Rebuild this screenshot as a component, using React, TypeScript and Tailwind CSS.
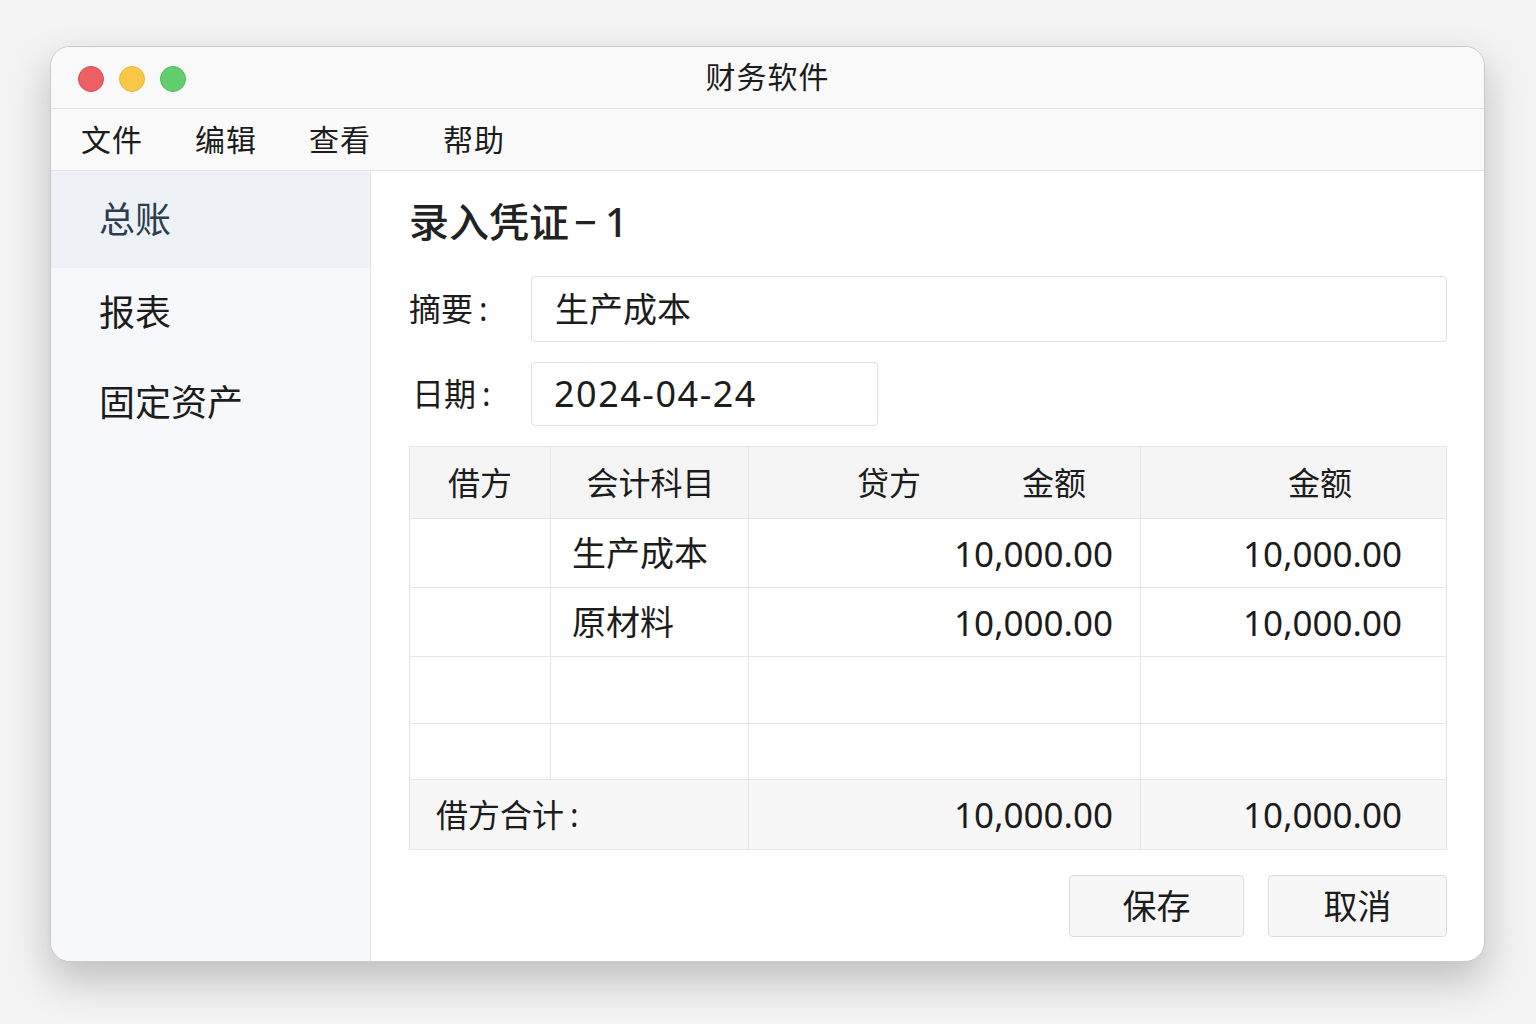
import React from "react";

const font = { fontFamily: '"Noto Sans", "Noto Sans CJK SC", sans-serif' };

function Cell({ className = "", children }: { className?: string; children?: React.ReactNode }) {
  return <div className={"flex items-center border-[#e6e6e6] " + className}>{children}</div>;
}

export default function App() {
  const rows = [
    { subject: "生产成本", a: "10,000.00", b: "10,000.00", h: "h-[69px]" },
    { subject: "原材料", a: "10,000.00", b: "10,000.00", h: "h-[69px]" },
    { subject: "", a: "", b: "", h: "h-[67px]" },
    { subject: "", a: "", b: "", h: "h-[56px]" },
  ];
  return (
    <div className="w-[1536px] h-[1024px] bg-[#f3f3f3] overflow-hidden pt-[46px] pl-[50px] text-[#1c1c1c]" style={font}>
      <div className="w-[1435px] h-[916px] rounded-[20px] border border-[#c9c9c9] bg-white overflow-hidden flex flex-col shadow-[0_18px_40px_rgba(0,0,0,0.22)]">
        {/* title bar */}
        <div className="h-[62px] shrink-0 bg-[#f9f9fa] border-b border-[#e2e2e2] grid grid-cols-[1fr_auto_1fr] items-center">
          <div className="flex items-center gap-[15px] pl-[27px] pt-[2px]">
            <div className="w-[26px] h-[26px] rounded-full bg-[#ec5f63] border border-[#d9494f]" />
            <div className="w-[26px] h-[26px] rounded-full bg-[#f8c748] border border-[#e8b73c]" />
            <div className="w-[26px] h-[26px] rounded-full bg-[#62cf6e] border border-[#4fbb5c]" />
          </div>
          <div className="text-[30px] leading-none tracking-[1px] pb-[2px]">财务软件</div>
          <div />
        </div>
        {/* menu bar */}
        <div className="h-[62px] shrink-0 bg-[#fafafa] border-b border-[#e4e4e4] flex items-center pl-[30px] text-[30px] leading-none tracking-[1px]">
          <span>文件</span>
          <span className="ml-[52px]">编辑</span>
          <span className="ml-[52px]">查看</span>
          <span className="ml-[72px]">帮助</span>
        </div>
        {/* body */}
        <div className="flex flex-1 min-h-0">
          <div className="w-[320px] shrink-0 bg-[#f6f8fb] border-r border-[#e4e6ea] flex flex-col text-[36px] leading-none">
            <div className="h-[97px] bg-[#eef2f7] flex items-center pl-[48px] text-[#2b3d50]">总账</div>
            <div className="h-[90px] flex items-center pl-[48px]">报表</div>
            <div className="h-[90px] flex items-center pl-[48px]">固定资产</div>
          </div>
          <div className="flex-1 pl-[38px] pr-[37px] pt-[27px]">
            <div className="h-[48px] flex items-center text-[40px] font-medium leading-none text-[#222]">
              <span>录入凭证</span>
              <span className="ml-[5px]">−</span>
              <span className="ml-[8px]">1</span>
            </div>
            <div className="mt-[30px] flex items-center">
              <div className="w-[122px] text-[32px] leading-none flex">
                <span>摘要</span>
                <span className="ml-[6px]">:</span>
              </div>
              <div className="flex-1 h-[66px] border border-[#e0e0e0] rounded-[4px] flex items-center pl-[23px] text-[34px] leading-none">生产成本</div>
            </div>
            <div className="mt-[20px] flex items-center">
              <div className="w-[122px] text-[32px] leading-none pl-[3px] flex">
                <span>日期</span>
                <span className="ml-[6px]">:</span>
              </div>
              <div className="w-[347px] h-[64px] border border-[#e0e0e0] rounded-[4px] flex items-center pl-[22px] text-[36px] tracking-[1.5px] leading-none">2024-04-24</div>
            </div>
            {/* table */}
            <div className="mt-[20px] w-[1038px] border border-[#e6e6e6] text-[32px] leading-none">
              <div className="grid grid-cols-[141px_198px_392px_1fr] h-[72px] bg-[#f5f5f5] border-b border-[#e6e6e6]">
                <Cell className="justify-center border-r">借方</Cell>
                <Cell className="justify-center border-r pl-[2px]">会计科目</Cell>
                <Cell className="justify-between border-r pl-[108px] pr-[54px]">
                  <span>贷方</span>
                  <span>金额</span>
                </Cell>
                <Cell className="justify-end pr-[94px]">金额</Cell>
              </div>
              {rows.map((r, i) => (
                <div key={i} className={"grid grid-cols-[141px_198px_392px_1fr] border-b border-[#e6e6e6] " + r.h}>
                  <Cell className="border-r" />
                  <Cell className="border-r pl-[21px] text-[34px]">{r.subject}</Cell>
                  <Cell className="border-r justify-end pr-[27px] text-[35px]">{r.a}</Cell>
                  <Cell className="justify-end pr-[44px] text-[35px]">{r.b}</Cell>
                </div>
              ))}
              <div className="grid grid-cols-[339px_392px_1fr] h-[69px] bg-[#f7f7f7]">
                <Cell className="border-r pl-[26px]">
                  <span>借方合计</span>
                  <span className="ml-[6px]">:</span>
                </Cell>
                <Cell className="border-r justify-end pr-[27px] text-[35px]">10,000.00</Cell>
                <Cell className="justify-end pr-[44px] text-[35px]">10,000.00</Cell>
              </div>
            </div>
            <div className="mt-[25px] w-[1038px] flex justify-end gap-[24px]">
              <button className="w-[175px] h-[62px] bg-[#f7f7f7] border border-[#dcdcdc] rounded-[4px] text-[34px] leading-none flex items-center justify-center">保存</button>
              <button className="w-[179px] h-[62px] bg-[#f7f7f7] border border-[#dcdcdc] rounded-[4px] text-[34px] leading-none flex items-center justify-center">取消</button>
            </div>
          </div>
        </div>
      </div>
    </div>
  );
}
